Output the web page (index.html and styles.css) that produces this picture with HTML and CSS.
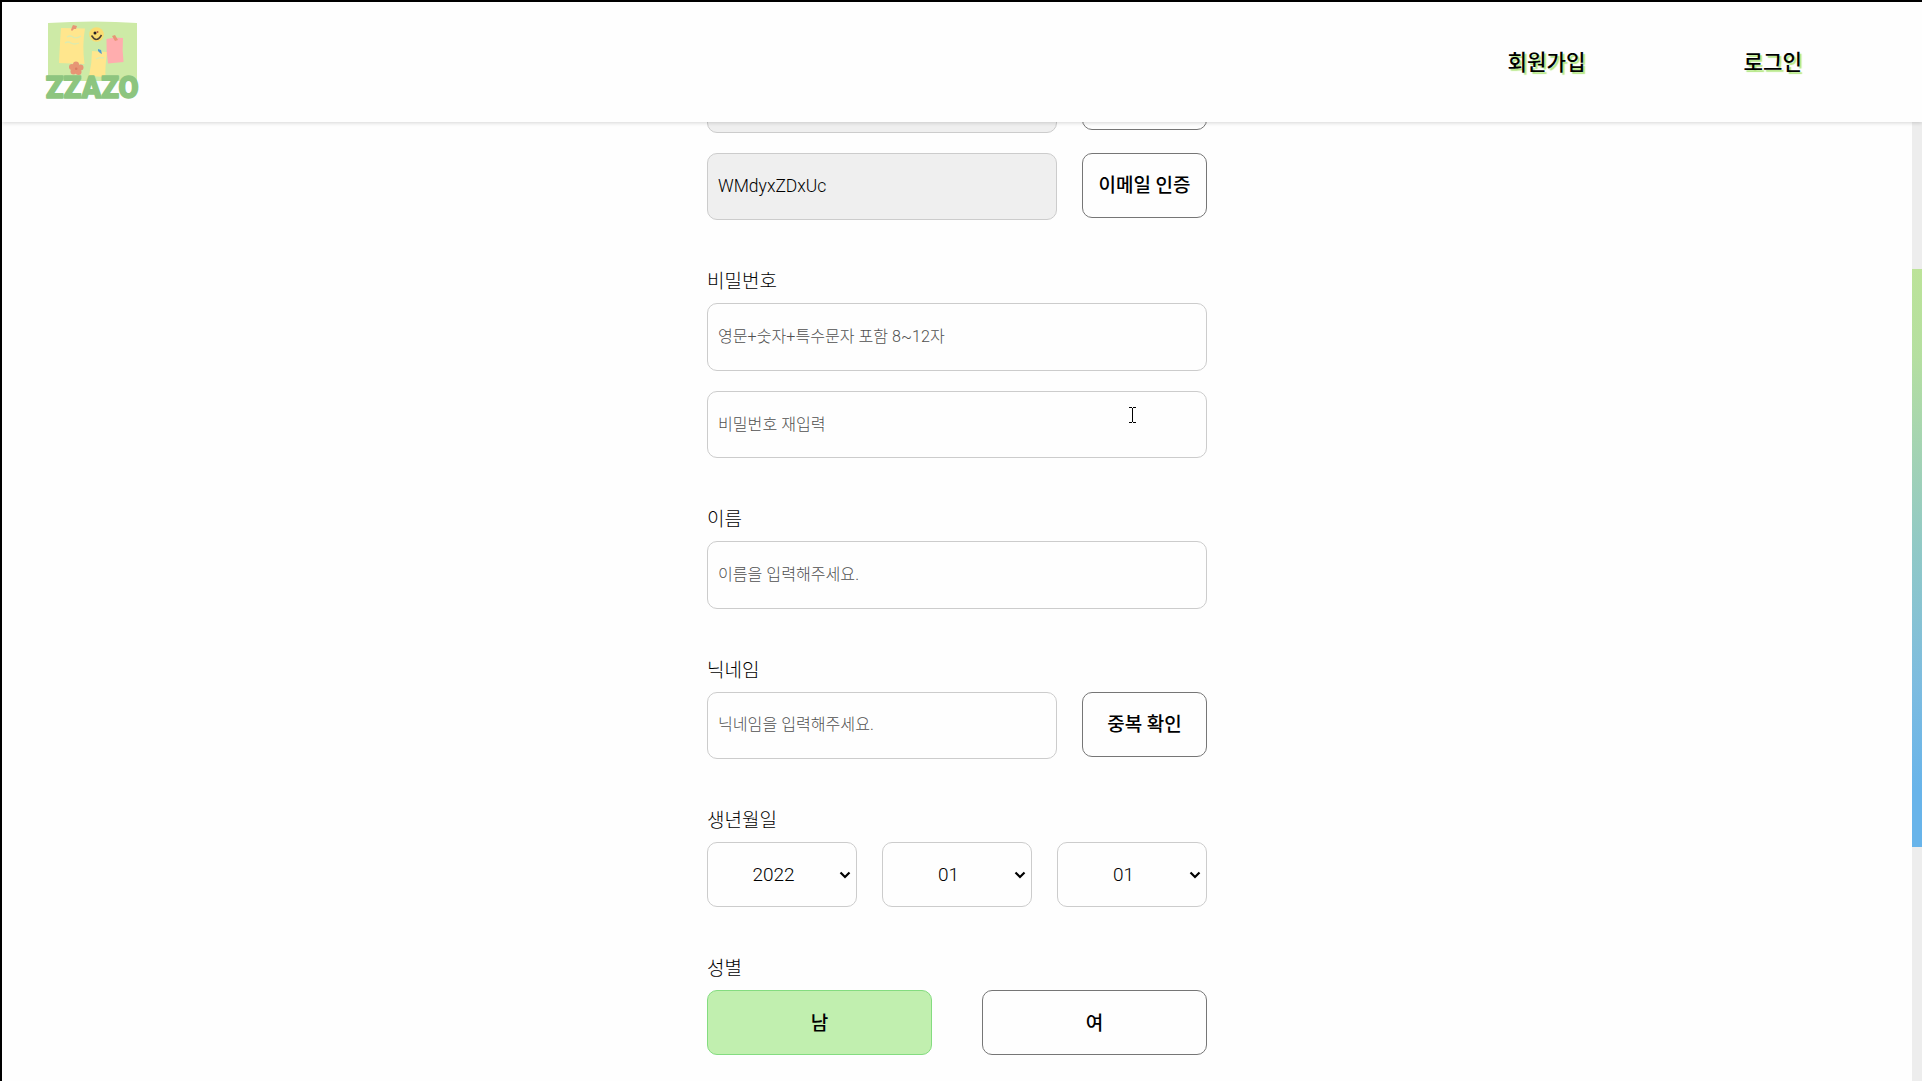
FILE: index.html
```html
<!DOCTYPE html>
<html lang="ko">
<head>
<meta charset="utf-8">
<title>ZZAZO</title>
<link rel="stylesheet" href="styles.css">
</head>
<body>
<header class="header">
  <a class="logo" aria-label="ZZAZO">
    <svg width="100" height="86" viewBox="0 0 100 86">
      <path d="M3 2Q50-1 92 2V60H3Z" fill="#cdeaa6"/>
      <path d="M16 7L40 7.500Q37 24 39.500 43L14 42Q15 20 16 7Z" fill="#ffe68d"/>
      <path d="M47 30L62 31Q60 46 60.500 56L44 55Q47 42 47 30Z" fill="#ffe68d"/>
      <path d="M61.500 18Q70 16 78 17Q77 29 78.500 41L63 42.500Q61 30 61.500 18Z" fill="#ffadae"/>
      <path d="M22 16q3-2 6 0t8-1M20 22q3-2 6 0t8 0M51 38q4-2 8-1" fill="none" stroke="#dcebb0" stroke-width="1.300"/>
      <g fill="#e79575">
        <path d="M28 4l4 1-1 3-2 0-2 2-1-1 1-3z"/>
        <path d="M67 15l3-1 3 5-3 1z"/>
        <circle cx="31" cy="43.500" r="3"/><circle cx="35.500" cy="46.500" r="3"/><circle cx="33.500" cy="51" r="3"/><circle cx="28.500" cy="50.500" r="3"/><circle cx="27" cy="46" r="3"/><circle cx="31" cy="47.500" r="3"/>
      </g>
      <circle cx="31.200" cy="47.800" r="1.300" fill="#d97c62"/>
      <path d="M53 28l3 1 1 4-2-1-2-2z" fill="#519bd1"/>
      <circle cx="51.500" cy="13.500" r="7.300" fill="#fbdc70"/>
      <path d="M46.500 14.500q5 8 10-.500" fill="none" stroke="#4c4035" stroke-width="1.500"/>
      <circle cx="50" cy="12" r="1.500" fill="#241d25"/><circle cx="52.500" cy="11" r="1" fill="#b05c45"/>
      <text class="logo-text" x="0.700" y="77" textLength="93" lengthAdjust="spacingAndGlyphs">ZZAZO</text>
    </svg>
  </a>
  <nav class="nav"><a>회원가입</a><a>로그인</a></nav>
</header>
<div class="viewport">
  <main class="page">
    <form class="form">
      <div class="row"><input class="field" disabled><button type="button" class="btn side"></button></div>
      <div class="row"><input class="field" value="WMdyxZDxUc" disabled><button type="button" class="btn side">이메일 인증</button></div>

      <label class="label">비밀번호</label>
      <div class="row"><input class="field" placeholder="영문+숫자+특수문자 포함 8~12자"></div>
      <div class="row"><input class="field" placeholder="비밀번호 재입력"></div>

      <label class="label">이름</label>
      <div class="row"><input class="field" placeholder="이름을 입력해주세요."></div>

      <label class="label">닉네임</label>
      <div class="row"><input class="field" placeholder="닉네임을 입력해주세요."><button type="button" class="btn side">중복 확인</button></div>

      <label class="label">생년월일</label>
      <div class="row">
        <div class="picker"><select class="select"><option>2022</option></select><svg class="chevron" viewBox="0 0 12 8"><path d="M1.500 1.500L6 6L10.500 1.500"/></svg></div>
        <div class="picker"><select class="select"><option>01</option></select><svg class="chevron" viewBox="0 0 12 8"><path d="M1.500 1.500L6 6L10.500 1.500"/></svg></div>
        <div class="picker"><select class="select"><option>01</option></select><svg class="chevron" viewBox="0 0 12 8"><path d="M1.500 1.500L6 6L10.500 1.500"/></svg></div>
      </div>

      <label class="label">성별</label>
      <div class="row wide"><button type="button" class="btn selected">남</button><button type="button" class="btn">여</button></div>
    </form>
  </main>
  <div class="scrollbar"><div class="thumb"></div></div>
</div>
<svg class="cursor" width="9" height="18" viewBox="0 0 9 18"><path d="M1 1.500H4M5 1.500H8M4.500 2V16M1 16.500H4M5 16.500H8" fill="none" stroke="#000"/></svg>
</body>
</html>
```
FILE: styles.css
```css
* { box-sizing: border-box; }
body {
  margin: 0;
  height: 1081px;
  display: flex;
  flex-direction: column;
  overflow: hidden;
  border-top: 2px solid #000;
  border-left: 2px solid #000;
  background: #fefefe;
  color: #000;
  font-family: Roboto, "Noto Sans CJK KR", sans-serif;
  font-weight: 300;
}
.header {
  flex: none;
  height: 120px;
  display: flex;
  align-items: flex-start;
  justify-content: space-between;
  padding: 19px 120px 0 43px;
  background: #fefefe;
  box-shadow: 0 1px 4px rgba(0, 0, 0, .16);
  z-index: 1;
}
.logo svg { display: block; overflow: visible; }
.logo-text { font: 900 31px Roboto, sans-serif; fill: #8dc57f; stroke: #8dc57f; stroke-width: 1.5; stroke-linejoin: round; }
.nav { display: flex; gap: 158px; padding-top: 27px; }
.nav a { font-size: 21.2px; line-height: 30px; font-weight: 500; text-shadow: 2px 2px 1px #b4e884; }
.viewport { flex: 1; min-height: 0; display: flex; overflow: hidden; }
.page { flex: 1; overflow: hidden; }
.form { width: 500px; margin: -56.7px 0 0 705px; }
.row { display: flex; align-items: flex-start; gap: 25px; margin-bottom: 20.2px; }
.row.wide { gap: 50px; }
.field {
  flex: 1;
  min-width: 0;
  height: 67.4px;
  padding: 0 10px 2px;
  border: 1px solid #ccc;
  border-radius: 10px;
  background: transparent;
  color: #000;
  font: inherit;
  font-size: 17.5px;
}
.field::placeholder { color: #505050; font-size: 16.1px; }
.field:disabled { background: #efefef; }
.label { display: block; height: 33px; margin-top: 50px; font-size: 19px; line-height: 24px; }
.btn {
  flex: 1;
  height: 65px;
  padding: 0 0 3px;
  border: 1px solid #767676;
  border-radius: 10px;
  background: transparent;
  color: #000;
  font: inherit;
  font-size: 19px;
  font-weight: 500;
}
.btn.side { flex: none; width: 125px; }
.btn.selected { background: #c1efaf; border-color: #84dc80; }
.picker { position: relative; flex: 1; height: 65px; }
.select {
  appearance: none;
  width: 100%;
  height: 65px;
  padding: 0 17px 0 0;
  border: 1px solid #ccc;
  border-radius: 10px;
  background: transparent;
  color: #000;
  font: inherit;
  font-size: 19px;
  text-align: center;
}
.chevron { position: absolute; right: 6px; top: 29px; width: 12px; height: 8px; fill: none; stroke: #000; stroke-width: 2.2; pointer-events: none; }
.scrollbar { width: 10px; padding-top: 147px; background: #ededed; }
.thumb { height: 578px; background: linear-gradient(#bce399, #b5dfa0 15%, #a2d2b5 33%, #8fc8c8 50%, #7dbce0 72%, #68b4ea 90%); }
.cursor { position: absolute; left: 1128px; top: 406px; }
```
